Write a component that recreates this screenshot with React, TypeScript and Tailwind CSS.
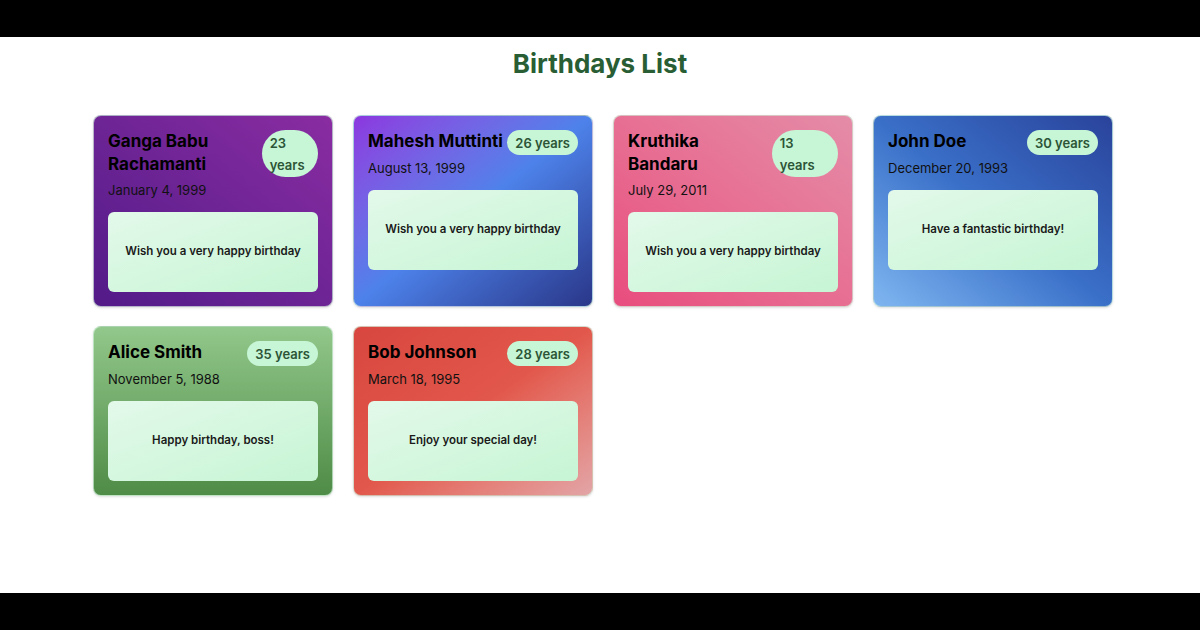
import React from "react";

interface Birthday {
  id: number;
  name: string;
  age: number;
  date: string;
  message: string;
  bg: string;
}

const birthdays: Birthday[] = [
  {
    id: 1,
    name: "Ganga Babu Rachamanti",
    age: 23,
    date: "January 4, 1999",
    message: "Wish you a very happy birthday",
    bg: "bg-gradient-to-bl from-[#8a2ca2] to-[#521a88]",
  },
  {
    id: 2,
    name: "Mahesh Muttinti",
    age: 26,
    date: "August 13, 1999",
    message: "Wish you a very happy birthday",
    bg: "bg-gradient-to-br from-[#8b36df] via-[#4d82ea] to-[#2a3789]",
  },
  {
    id: 3,
    name: "Kruthika Bandaru",
    age: 13,
    date: "July 29, 2011",
    message: "Wish you a very happy birthday",
    bg: "bg-gradient-to-bl from-[#e48ca8] to-[#e84c7e]",
  },
  {
    id: 4,
    name: "John Doe",
    age: 30,
    date: "December 20, 1993",
    message: "Have a fantastic birthday!",
    bg: "bg-gradient-to-bl from-[#2a439b] via-[#3a6fc8] to-[#7fb6f0]",
  },
  {
    id: 5,
    name: "Alice Smith",
    age: 35,
    date: "November 5, 1988",
    message: "Happy birthday, boss!",
    bg: "bg-gradient-to-b from-[#92c88b] to-[#4f8c47]",
  },
  {
    id: 6,
    name: "Bob Johnson",
    age: 28,
    date: "March 18, 1995",
    message: "Enjoy your special day!",
    bg: "bg-gradient-to-br from-[#d8463f] via-[#e2574b] to-[#e2a4a6]",
  },
];

function BirthdayCard({ item }: { item: Birthday }) {
  return (
    <div
      className={`${item.bg} rounded-lg border border-[#d2f0dc]/70 shadow-sm px-[14px] pt-[14px] pb-[14px] flex flex-col`}
    >
      <div className="flex items-start justify-between gap-[4px]">
        <h2 className="text-[17px] leading-[23px] font-bold text-black">{item.name}</h2>
        <span className="bg-[#c6f6d5] text-[#2c5437] text-[13px] leading-[22px] font-semibold px-[8px] py-[1.5px] rounded-full">
          {item.age} years
        </span>
      </div>
      <p className="mt-[3px] text-[13px] leading-[20px] text-[#111]">{item.date}</p>
      <div className="mt-[12px] h-[80px] rounded-md bg-gradient-to-br from-[#e3f9ea] to-[#c6f5d4] flex items-center justify-center px-3">
        <p className="text-[11.5px] font-semibold text-[#1a1a1a] text-center">{item.message}</p>
      </div>
    </div>
  );
}

export default function App() {
  return (
    <div
      className="h-screen flex flex-col bg-white"
      style={{ fontFamily: "Inter, 'Noto Sans', sans-serif" }}
    >
      <div className="h-[37px] bg-black shrink-0" />
      <main className="flex-1 pt-[11px]">
        <h1 className="text-center text-[26px] leading-[32px] font-bold text-[#295d33]">
          Birthdays List
        </h1>
        <div className="mt-[35px] ml-[93px] w-[1020px] grid grid-cols-4 gap-x-[20px] gap-y-[19px]">
          {birthdays.map((b) => (
            <BirthdayCard key={b.id} item={b} />
          ))}
        </div>
      </main>
      <div className="h-[37px] bg-black shrink-0" />
    </div>
  );
}
